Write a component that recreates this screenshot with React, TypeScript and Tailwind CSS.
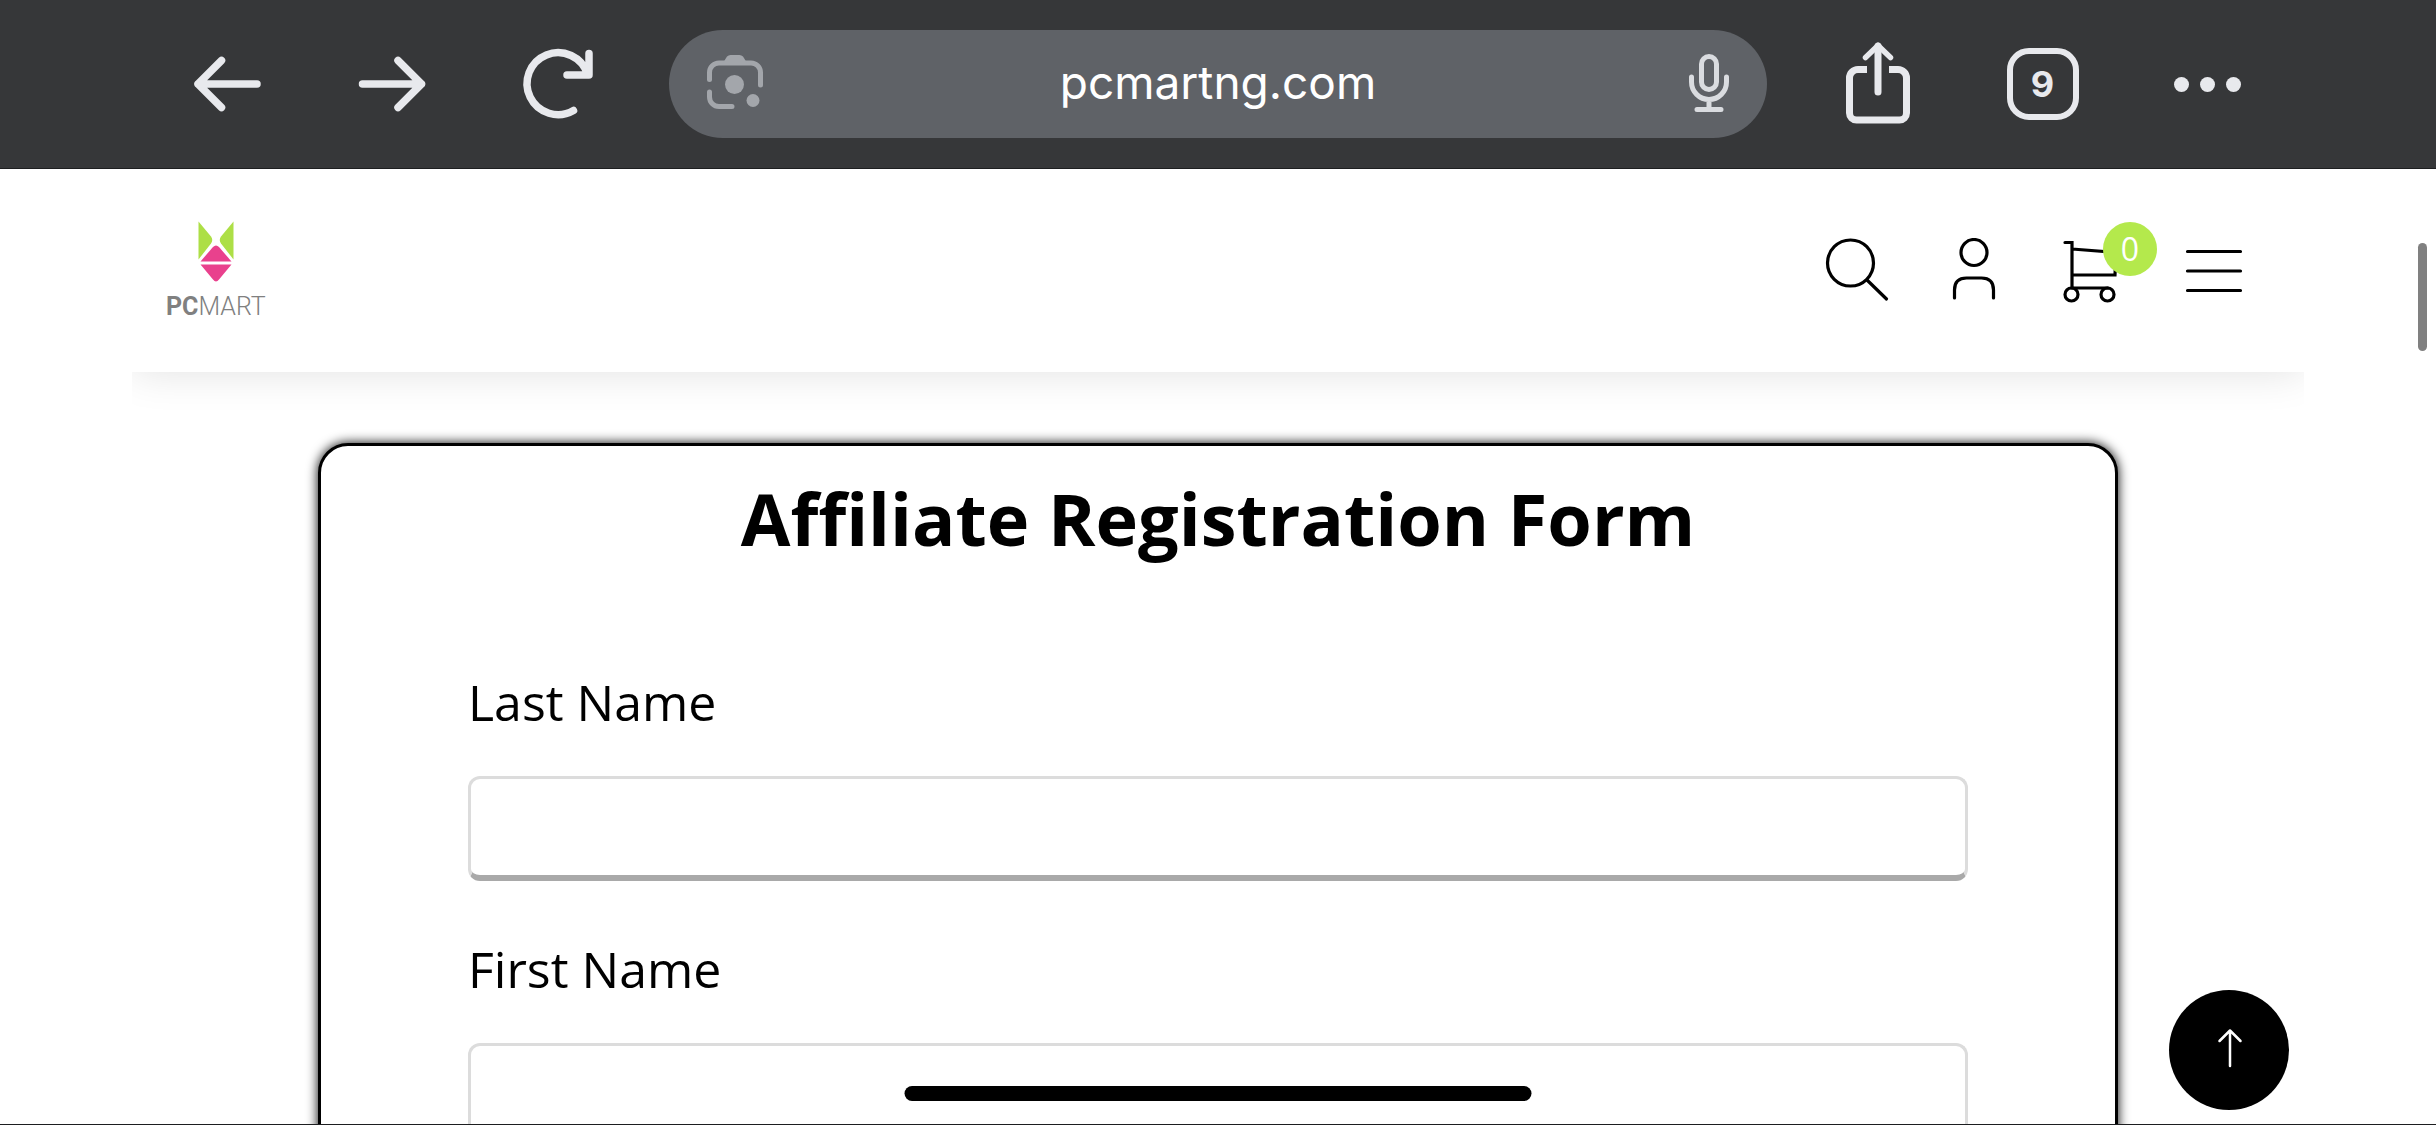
import type { ReactNode } from 'react';

const FIELDS = [
  { id: 'last-name', label: 'Last Name' },
  { id: 'first-name', label: 'First Name' },
];

function ToolbarButton({ label, children }: { label: string; children: ReactNode }) {
  return (
    <button type="button" aria-label={label} className="flex h-full w-[165px] shrink-0 items-center justify-center">
      {children}
    </button>
  );
}

function BrowserToolbar() {
  return (
    <div className="flex h-[169px] shrink-0 items-center border-b border-[#1d1e20] bg-[#363739] pr-[146px] pl-[145px] text-[#e8e9ed]">
      <ToolbarButton label="Back">
        <svg width="80" height="80" viewBox="0 0 80 80" fill="none" stroke="currentColor" strokeWidth="7.5" strokeLinecap="round" strokeLinejoin="round">
          <path d="M69 40H10M33.500 16.500L10 40l23.500 23.500" />
        </svg>
      </ToolbarButton>
      <ToolbarButton label="Forward">
        <svg width="80" height="80" viewBox="0 0 80 80" fill="none" stroke="currentColor" strokeWidth="7.5" strokeLinecap="round" strokeLinejoin="round">
          <path d="M9.500 40h59M45 16.500L68.500 40 45 63.500" />
        </svg>
      </ToolbarButton>
      <ToolbarButton label="Reload">
        <svg width="80" height="80" viewBox="0 0 80 80" fill="none" stroke="currentColor" strokeWidth="7.5" strokeLinecap="round" strokeLinejoin="round">
          <path d="M55.500 66.500A31 31 0 1 1 69.500 30M71 9.500V31H49" />
        </svg>
      </ToolbarButton>

      <div className="mr-[28px] ml-[29px] flex h-[108px] flex-1 items-center justify-between rounded-full bg-[#5f6267] px-[22px]">
        <button type="button" aria-label="Search with camera" className="text-[#a3a6ab]">
          <svg width="72" height="72" viewBox="-8 0 72 72" fill="none" stroke="currentColor" strokeWidth="5" strokeLinecap="round">
            <path d="M10.500 31.500V24.500a9.500 9.500 0 0 1 9.500-9.500h32a9.500 9.500 0 0 1 9.500 9.500V37" />
            <path d="M10.500 44v5a9.500 9.500 0 0 0 9.500 9.500h13" />
            <path d="M24 15l4-6.500Q29.500 7 31.500 7h9q2 0 3.500 1.500l4 6.500z" fill="currentColor" stroke="none" />
            <circle cx="35.500" cy="36.500" r="9.500" fill="currentColor" stroke="none" />
            <circle cx="54" cy="52.500" r="6.500" fill="currentColor" stroke="none" />
          </svg>
        </button>
        <a href="https://pcmartng.com" className="mb-1 font-['Inter',sans-serif] text-[46px] leading-[60px] text-white">
          pcmartng.com
        </a>
        <button type="button" aria-label="Voice search" className="text-[#dadce0]">
          <svg width="72" height="64" viewBox="-8 0 72 64" fill="none" stroke="currentColor" strokeWidth="5" strokeLinecap="round">
            <rect x="20.500" y="4.500" width="15" height="33" rx="7.500" />
            <path d="M10.500 25v5a17.500 17.500 0 0 0 35 0v-5M28 48v9M16 57.500h24" />
          </svg>
        </button>
      </div>

      <ToolbarButton label="Share">
        <svg width="80" height="90" viewBox="0 -1 80 90" fill="none" stroke="currentColor" strokeWidth="7">
          <path d="M29 29.500H20a8.500 8.500 0 0 0-8.500 8.500v35a7 7 0 0 0 7 7h43a7 7 0 0 0 7-7V38a8.500 8.500 0 0 0-8.500-8.500h-9" />
          <path d="M40 52V6" strokeLinecap="round" />
          <path d="M27.500 17.500L40 5.500l12.500 12" strokeWidth="5.500" strokeLinecap="round" strokeLinejoin="round" />
        </svg>
      </ToolbarButton>
      <ToolbarButton label="9 open tabs">
        <span className="flex size-[72px] items-center justify-center rounded-[22px] border-[6px] border-[#e8e9ed] font-['Inter',sans-serif] text-[36px] leading-none font-bold">
          9
        </span>
      </ToolbarButton>
      <ToolbarButton label="More">
        <span className="flex gap-[11px]">
          <span className="size-[15px] rounded-full bg-[#e8e9ed]" />
          <span className="size-[15px] rounded-full bg-[#e8e9ed]" />
          <span className="size-[15px] rounded-full bg-[#e8e9ed]" />
        </span>
      </ToolbarButton>
    </div>
  );
}

function SiteHeader() {
  return (
    <header className="flex h-[203px] items-center justify-between bg-white pr-[58px] pl-[34px] shadow-[0_0_40px_rgba(0,0,0,0.12)]">
      <a href="#" aria-label="PCMART home" className="flex flex-col items-center gap-[11px] text-[#808080]">
        <svg width="40" height="62" viewBox="0 0 40 62">
          <path d="M2.500 0.500L15 15.500q2.500 3.500 0 7L2.500 38.500z" fill="#addf46" />
          <path d="M37.500 0.500L25 15.500q-2.500 3.500 0 7L37.500 38.500z" fill="#addf46" />
          <path d="M4.500 40.500L17 26q3-3 6 0l12.500 14.500z" fill="#e9418d" />
          <path d="M4.500 43.500L17 58.500q3 4 6 0l12.500-15z" fill="#e9418d" />
        </svg>
        <span className="font-['Roboto',sans-serif] text-[25px] leading-[26px] font-light whitespace-nowrap">
          <b className="font-bold">PC</b>MART
        </span>
      </a>

      <nav aria-label="Store" className="flex items-center gap-[53px] text-black">
        <button type="button" aria-label="Search">
          <svg width="64" height="65" viewBox="0 0 64 65" fill="none" stroke="currentColor" strokeWidth="3.2" strokeLinecap="round">
            <circle cx="25.500" cy="25" r="23" />
            <path d="M42 42l19.500 19" />
          </svg>
        </button>
        <button type="button" aria-label="Account">
          <svg width="64" height="65" viewBox="0 0 64 65" fill="none" stroke="currentColor" strokeWidth="3.2" strokeLinecap="round">
            <circle cx="32" cy="14.500" r="13" />
            <path d="M12.500 60V52q0-12 12-12h15q12 0 12 12v8" />
          </svg>
        </button>
        <button type="button" aria-label="Cart, 0 items" className="relative">
          <svg width="64" height="65" viewBox="0 0 64 65" fill="none" stroke="currentColor" strokeWidth="3.2" strokeLinecap="round">
            <path d="M6 4.500h7V50M13 11l44 3.500-1 22.500H14M13 50h36" />
            <circle cx="12.500" cy="56.500" r="6.500" />
            <circle cx="48.500" cy="56.500" r="6.500" />
          </svg>
          <span className="absolute -top-4 left-11 flex size-[54px] items-center justify-center rounded-full bg-[#b4e94c] font-['Open_Sans',sans-serif] text-[32px] leading-none text-white">
            0
          </span>
        </button>
        <button type="button" aria-label="Menu" className="ml-1.5">
          <svg width="64" height="65" viewBox="0 0 64 65" fill="none" stroke="currentColor" strokeWidth="3.2" strokeLinecap="round">
            <path d="M5.500 13.500h53M5.500 33h53M5.500 52.500h53" />
          </svg>
        </button>
      </nav>
    </header>
  );
}

function RegistrationForm() {
  return (
    <form className="mx-[186px] mt-[71px] rounded-[30px] border-3 border-black bg-white px-[147px] pt-[22px] pb-[120px] font-['Open_Sans',sans-serif] text-black shadow-[0_0_12px_#000]">
      <h1 className="mb-[99px] text-center text-[72px] leading-[100px] font-bold whitespace-nowrap">
        Affiliate Registration Form
      </h1>
      {FIELDS.map((field) => (
        <div key={field.id} className="mb-[53px]">
          <label htmlFor={field.id} className="mb-[39px] block text-[50px] leading-[70px]">
            {field.label}
          </label>
          <input
            id={field.id}
            type="text"
            className="block h-[105px] w-full rounded-[12px] border-3 border-b-6 border-[#dcdcdc] border-b-[#a9a9a9] bg-white px-9 text-[48px] outline-none"
          />
        </div>
      ))}
    </form>
  );
}

export default function App() {
  return (
    <div className="relative flex h-screen flex-col overflow-hidden bg-white">
      <BrowserToolbar />

      <main className="mx-[132px] min-h-0 flex-1 overflow-hidden">
        <SiteHeader />
        <RegistrationForm />
      </main>

      {/* Scroll position */}
      <div className="absolute top-[243px] right-[9px] h-[108px] w-[9px] rounded-full bg-[#808080]" />

      <button
        type="button"
        aria-label="Back to top"
        className="absolute right-[147px] bottom-[15px] flex size-[120px] items-center justify-center rounded-full bg-black text-white"
      >
        <svg width="40" height="44" viewBox="0 0 40 44" fill="none" stroke="currentColor" strokeWidth="2.5" strokeLinecap="round" strokeLinejoin="round">
          <path d="M21 38V3M10.500 13L21 2.500 31.500 13" />
        </svg>
      </button>

      {/* Home indicator */}
      <div className="absolute bottom-6 left-1/2 h-[15px] w-[627px] -translate-x-1/2 rounded-full bg-black" />
      <div className="absolute inset-x-0 bottom-0 h-px bg-[#1d1e20]" />
    </div>
  );
}
